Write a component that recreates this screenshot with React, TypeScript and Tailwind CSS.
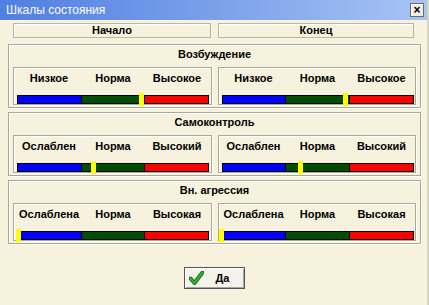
const groups = [
  {
    title: 'Возбуждение',
    labels: ['Низкое', 'Норма', 'Высокое'],
    marks: [121, 120],
  },
  {
    title: 'Самоконтроль',
    labels: ['Ослаблен', 'Норма', 'Высокий'],
    marks: [73, 75],
  },
  {
    title: 'Вн. агрессия',
    labels: ['Ослаблена', 'Норма', 'Высокая'],
    marks: [-2, -4],
  },
];

function Scale({ labels, mark }: { labels: string[]; mark: number }) {
  return (
    <div className="flex-1 h-[38px] border border-[#aca899] shadow-[inset_1px_1px_0_#fff,1px_1px_0_#fff] pl-[3px] pt-[4px]">
      <div className="w-[192px]">
        <div className="grid grid-cols-3 text-center h-[13px] leading-[13px] text-[11px] font-bold text-black">
          {labels.map((l) => (
            <span key={l} className="whitespace-nowrap">
              {l}
            </span>
          ))}
        </div>
        <div className="relative mt-[10px] h-[9px] border border-black flex">
          <div className="flex-1 bg-[#0000ff]" />
          <div className="flex-1 bg-[#004c00] border-l border-black" />
          <div className="flex-1 bg-[#ff0000] border-l border-black" />
          <div
            className="absolute top-[-3px] h-[13px] w-[5px] bg-[#ffff00]"
            style={{ left: mark }}
          />
        </div>
      </div>
    </div>
  );
}

export default function App() {
  return (
    <div className="w-[429px] h-[305px] bg-[#f6f2dd] border-r-2 border-[#d8d4c0] flex flex-col font-['Liberation_Sans',Arial,sans-serif] overflow-hidden">
      {/* Title bar */}
      <div className="h-[20px] flex items-center justify-between pl-[6px] pr-[3px] bg-gradient-to-r from-[#4f7fe0] via-[#7aa0ea] to-[#a8c4f4]">
        <span className="text-white text-[12px] leading-none">Шкалы состояния</span>
        <div className="w-[14px] h-[14px] bg-[#f2efe2] border border-[#6b6b6b] shadow-[inset_1px_1px_0_#fff] flex items-center justify-center text-[12px] font-bold leading-none text-black">
          ×
        </div>
      </div>

      {/* Column headers */}
      <div className="flex gap-[7px] mt-[3px] pl-[13px] pr-[13px]">
        <div className="w-[198px] h-[15px] border border-[#b9b6a3] shadow-[inset_1px_1px_0_#fff] flex items-center justify-center text-[11px] font-bold">
          Начало
        </div>
        <div className="w-[196px] h-[15px] border border-[#b9b6a3] shadow-[inset_1px_1px_0_#fff] flex items-center justify-center text-[11px] font-bold">
          Конец
        </div>
      </div>

      {/* Groups */}
      <div className="flex flex-col gap-[4px] mt-[6px] ml-[8px] w-[413px]">
        {groups.map((g) => (
          <div
            key={g.title}
            className="h-[64px] border border-[#aca899] shadow-[inset_1px_1px_0_#fff,1px_1px_0_#fff] px-[4px] flex flex-col"
          >
            <div className="h-[22px] pb-[3px] flex items-center justify-center text-[11px] font-bold text-black">
              {g.title}
            </div>
            <div className="flex gap-[6px]">
              <Scale labels={g.labels} mark={g.marks[0]} />
              <Scale labels={g.labels} mark={g.marks[1]} />
            </div>
          </div>
        ))}
      </div>

      {/* Button */}
      <div className="flex justify-center mt-[23px] pl-[1px]">
        <button className="w-[61px] h-[22px] bg-[#f4f2ea] border border-[#555] shadow-[inset_1px_1px_0_#fff,inset_-1px_-1px_0_#a8a599] flex items-center pl-[4px] text-[11px] font-bold text-black">
          <svg width="15" height="14" viewBox="0 0 15 14">
            <path d="M1.5 7.5 L5.5 12 L13.5 1.5" fill="none" stroke="#0c5a0c" strokeWidth="3.8" strokeLinecap="round" strokeLinejoin="round" />
            <path d="M1.5 7.5 L5.5 12 L13.5 1.5" fill="none" stroke="#2fb52f" strokeWidth="2.2" strokeLinecap="round" strokeLinejoin="round" />
          </svg>
          <span className="ml-[12px]">Да</span>
        </button>
      </div>
    </div>
  );
}
